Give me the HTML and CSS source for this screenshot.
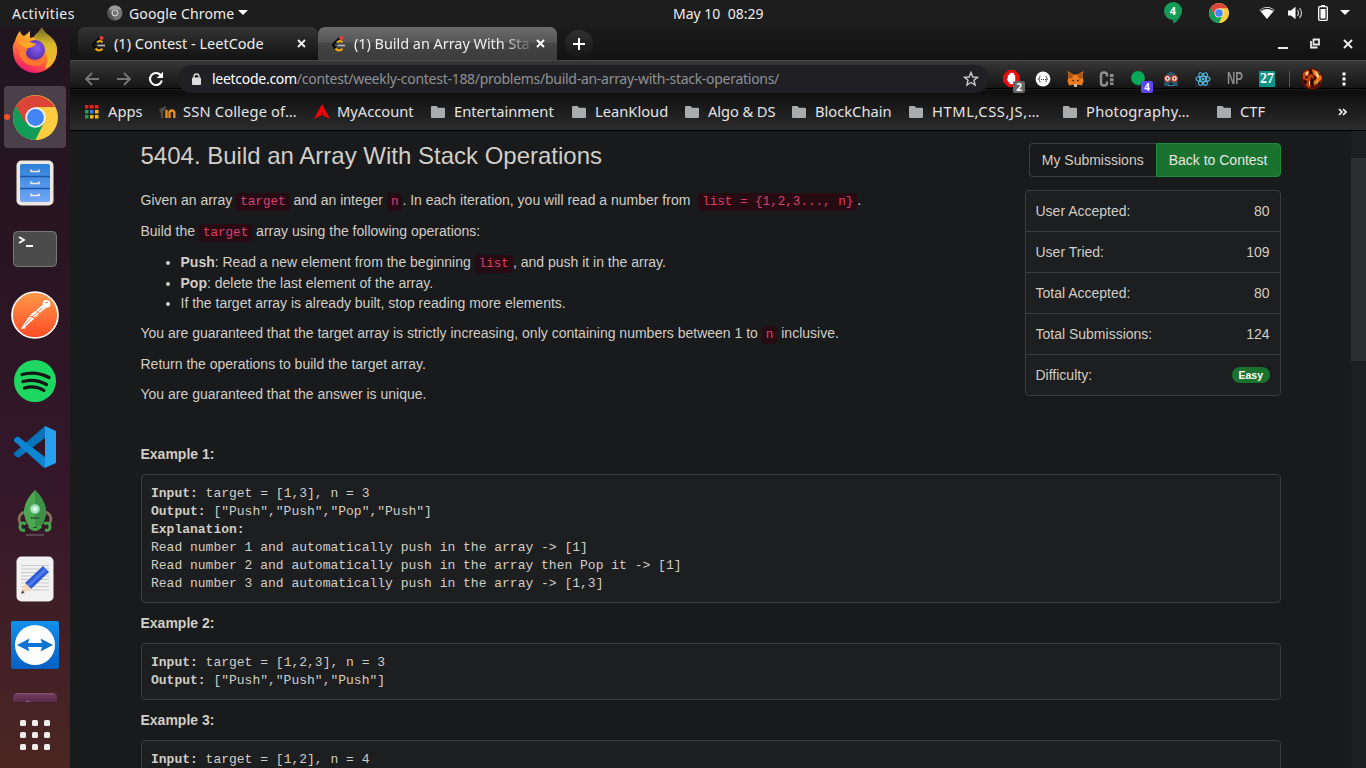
FILE: index.html
```html
<!DOCTYPE html>
<html lang="en">
<head>
<meta charset="utf-8">
<title>Build an Array With Stack Operations - LeetCode</title>
<link rel="stylesheet" href="styles.css">
</head>
<body>
<svg class="defs" width="0" height="0" aria-hidden="true">
  <defs>
    <linearGradient id="ffo" x1="0.8" y1="0" x2="0.3" y2="1"><stop offset="0" stop-color="#ffd93b"/><stop offset=".4" stop-color="#ff9a2c"/><stop offset=".75" stop-color="#ff4a45"/><stop offset="1" stop-color="#e8127c"/></linearGradient>
    <linearGradient id="ffy" x1="0" y1="0" x2="0" y2="1"><stop offset="0" stop-color="#6b6526"/><stop offset=".4" stop-color="#d8b92c"/><stop offset="1" stop-color="#ffb52c"/></linearGradient>
    <radialGradient id="ffp" cx=".6" cy=".4"><stop offset="0" stop-color="#8a5cf0"/><stop offset="1" stop-color="#5a35b8"/></radialGradient>
    <linearGradient id="pm" x1="0" y1="0" x2="0" y2="1"><stop offset="0" stop-color="#ff9a4a"/><stop offset="1" stop-color="#ff4a25"/></linearGradient>
    <linearGradient id="tv" x1="0" y1="0" x2="0" y2="1"><stop offset="0" stop-color="#1290ec"/><stop offset="1" stop-color="#0660c4"/></linearGradient>
    <linearGradient id="drawer" x1="0" y1="0" x2="0" y2="1"><stop offset="0" stop-color="#2d80d8"/><stop offset="1" stop-color="#72a6f5"/></linearGradient>
    <linearGradient id="plum" x1="0" y1="0" x2="0" y2="1"><stop offset="0" stop-color="#8a5a78"/><stop offset=".2" stop-color="#6f3a5c"/><stop offset="1" stop-color="#5a2a4a"/></linearGradient>
    <symbol id="chrome" viewBox="0 0 44 44">
      <circle cx="22" cy="22" r="22" fill="#ffcd40"/>
      <path d="M22 22 3 11A22 22 0 0 0 22 44L31.500 27.500Z" fill="#0f9d58"/>
      <path d="M22 22 12.500 27.500 3 11A22 22 0 0 1 41 12L22 12Z" fill="#db4437"/>
      <path d="M22 12H41A22 22 0 0 1 22 44L31 26Z" fill="#ffcd40"/>
      <circle cx="22" cy="22" r="10" fill="#f1f1f1"/><circle cx="22" cy="22" r="8.200" fill="#4285f4"/>
    </symbol>
    <symbol id="folder" viewBox="0 0 14 12"><path d="M1 0H5.500L7 1.700H13Q14 1.700 14 2.700V11Q14 12 13 12H1Q0 12 0 11V1Q0 0 1 0Z" fill="#a9abad"/></symbol>
    <symbol id="leet" viewBox="0 0 16 18">
      <path d="M8.500 3 2.500 9Q1.800 10 2.500 11L4.500 13.500" fill="none" stroke="#090909" stroke-width="2.200"/>
      <path d="M4.500 13.500Q8 17.500 11.500 13.800M6 7.500Q9 4.500 11.500 7.300" fill="none" stroke="#f5a80c" stroke-width="2"/>
      <path d="M6.500 10.500H14" stroke="#b8b8b8" stroke-width="1.700"/><circle cx="10.500" cy="3" r="2" fill="#dc4038"/>
    </symbol>
  </defs>
</svg>

<header class="topbar">
  <span class="activities">Activities</span>
  <svg class="app-icon" width="16" height="16" viewBox="0 0 16 16"><circle cx="8" cy="8" r="7.500" fill="#747474"/><path d="M1.500 4A7.500 7.500 0 0 1 14.500 4.500L8 4.500Z" fill="#9b9b9b"/><path d="M5 10 8 15.500A7.500 7.500 0 0 1 1.500 4Z" fill="#555"/><circle cx="8" cy="8" r="3.300" fill="#d8d8d8"/><circle cx="8" cy="8" r="2.400" fill="#747474"/></svg>
  <span class="app-name">Google Chrome</span>
  <i class="caret"></i>
  <span class="clock">May 10&nbsp; 08:29</span>
  <div class="tray">
    <svg class="hangouts" width="18" height="22" viewBox="0 0 18 22"><path d="M9 0A9 9 0 1 1 9 18L9.500 21.500Q16 18 17.500 11L9 0Z" fill="#159b57"/><circle cx="9" cy="9" r="9" fill="#159b57"/><text x="9" y="13.300" class="bubble-num">4</text></svg>
    <svg class="tray-chrome" width="20" height="20"><use href="#chrome"/></svg>
    <svg class="wifi" width="16" height="14" viewBox="0 0 16 14"><path d="M.5 4Q8-2 15.500 4L8 13Z" fill="#fff"/><path d="M1.500 4.600Q8 0 14.500 4.600" fill="none" stroke="#1d1d1d" stroke-width="1.200"/></svg>
    <svg class="sound" width="15" height="14" viewBox="0 0 15 14"><path d="M0 4.500H3L7.500.8V13.200L3 9.500H0Z" fill="#fff"/><path d="M9.500 4Q11.500 7 9.500 10M11.500 2Q15.500 7 11.500 12" fill="none" stroke="#ccc" stroke-width="1.200"/></svg>
    <svg class="battery" width="10" height="16" viewBox="0 0 10 16"><path d="M3 0H7V2H3Z" fill="#fff"/><rect x=".7" y="1.700" width="8.600" height="13.600" rx="1" fill="none" stroke="#fff" stroke-width="1.300"/><path d="M2.500 4H7.500V13.500H2.500Z" fill="#fff"/></svg>
    <i class="caret"></i>
  </div>
</header>

<div class="desktop">
  <nav class="dock">
    <div class="slot first"><svg width="46" height="46" viewBox="0 0 46 46"><path d="M3 14Q5 7 8 4Q9 8 12 9Q15 7 18 4L18 11 34 7Q44 13 45 24A22 22 0 0 1 1 24Q0 18 3 14Z" fill="url(#ffo)"/><path d="M30 0Q32 5 38 9Q46 16 45 25Q43 38 33 42Q38 30 32 20Q22 14 22 9Q26 6 30 0Z" fill="url(#ffy)"/><circle cx="23" cy="23" r="10" fill="url(#ffp)"/><path d="M7 18Q16 14 24 17Q21 21 16 21Q11 29 18 33Q28 36 34 29Q35 37 24 39Q10 38 7 27Z" fill="#ff7a2e"/><path d="M6 16Q15 13 24 17Q20 21 14 21Z" fill="#ffa72c"/></svg></div>
    <div class="slot active"><i class="run-dot"></i><svg width="45" height="45"><use href="#chrome"/></svg></div>
    <div class="slot"><svg width="38" height="46" viewBox="0 0 38 46"><rect x=".5" y=".5" width="37" height="45" rx="5" fill="#ede8e0"/><rect x="4" y="4" width="30" height="38" rx="2" fill="url(#drawer)"/><path d="M4 16.500H34M4 28.500H34" stroke="#1758a8" stroke-width="1.500"/><path d="M15 9.500V11.500H23V9.500M15 21.500V23.500H23V21.500M15 33.500V35.500H23V33.500" stroke="#eee9e2" stroke-width="1.600" fill="none"/></svg></div>
    <div class="slot"><svg width="44" height="36" viewBox="0 0 44 36"><rect x=".5" y=".5" width="43" height="35" rx="4" fill="#4b4b4b" stroke="#777"/><path d="M6 6 11 9 6 12M13 15H20" fill="none" stroke="#fff" stroke-width="1.800"/></svg></div>
    <div class="slot"><svg width="48" height="48" viewBox="0 0 48 48"><circle cx="24" cy="24" r="23" fill="url(#pm)" stroke="#fff" stroke-width="1.700"/><g fill="#fff"><circle cx="35.500" cy="12.800" r="3.900"/><path d="M31.500 14 34.500 17.500 25 26.500 18.500 24.500Z"/><path d="M18 25.500 23.500 27.500 14.500 35.500 14 37.500 10 38 12 34.500Z"/></g><path d="M31 17 21 26M33 18.500 23 27M25 19.500 29 23M20 27 14 34" stroke="#ff753a" stroke-width=".9"/><path d="M34 12 37 11" stroke="#ff753a"/></svg></div>
    <div class="slot"><svg width="42" height="42" viewBox="0 0 42 42"><circle cx="21" cy="21" r="21" fill="#1ed760"/><path d="M8 14.500Q22 10.500 35 17.500M9 21.500Q21 18 32.500 24.500M10.500 28Q21 25 30 30.500" fill="none" stroke="#151515" stroke-linecap="round" stroke-width="3.200"/></svg></div>
    <div class="slot"><svg width="42" height="42" viewBox="0 0 42 42"><path d="M31 0V12L5 31.500Q3 32 0 28.500V27Z" fill="#0873bb"/><path d="M0 14Q0 12 4 10.500L31 31V42Q29 41.500 28 40L0 15Z" fill="#0c86d4"/><path d="M31 0 42 5V37L31 42Z" fill="#28a0f0"/></svg></div>
    <div class="slot"><svg width="36" height="46" viewBox="0 0 36 46"><path d="M7 22Q-1 26 4 35M29 22Q37 26 32 35" fill="none" stroke="#85735b" stroke-width="2.600"/><path d="M18 0Q30 12 29 24Q27 34 23 37H13Q9 34 7 24Q6 12 18 0Z" fill="#4ca653"/><path d="M18 0Q30 12 29 24Q27 34 23 37H18Z" fill="#3c9146"/><circle cx="18" cy="19" r="4.800" fill="#9be0ba"/><circle cx="18" cy="19" r="2.500" fill="#d7f6e5"/><path d="M14 28H22" stroke="#20572a" stroke-width="2" stroke-dasharray="1.500 .8"/><path d="M9 34Q3 31 3 37Q3 41 8 40M27 34Q33 31 33 37Q33 41 28 40M12 36Q18 43 24 36" fill="none" stroke="#43a64c" stroke-width="3"/><path d="M9 45H27" stroke="#80727a" stroke-width="1"/></svg></div>
    <div class="slot"><svg width="38" height="46" viewBox="0 0 38 46"><rect x=".5" y=".5" width="37" height="45" rx="5" fill="#f1f1f1"/><path d="M5 9.500H33M5 13H33M5 16.500H33M5 20H33M5 23.500H33M5 27H33M5 30.500H33M5 34H33" stroke="#cbcbcb"/><path d="M27 10 33 16 15 33 9 27Z" fill="#315bd0"/><path d="M29 12 31 14 13 31 11 29Z" fill="#4d7cf0"/><path d="M9 27 15 33 5 38Z" fill="#f5d5b5"/><path d="M6.500 34.500 8.500 36.500 5 38Z" fill="#333"/></svg></div>
    <div class="slot"><svg width="48" height="48" viewBox="0 0 48 48"><rect width="48" height="48" rx="2" fill="url(#tv)"/><circle cx="24" cy="24" r="20" fill="#fff"/><path d="M6 24 18.500 17.500 17 22H31L29.500 17.500 42 24 29.500 30.500 31 26H17L18.500 30.500Z" fill="#0c74d3"/></svg></div>
    <div class="slot partial"><svg width="44" height="9" viewBox="0 0 44 9"><path d="M0 9V5Q0 0 5 0H39Q44 0 44 5V9Z" fill="url(#plum)"/><path d="M13 7 18 9H13Z" fill="#895b78"/></svg></div>
    <div class="grid-btn"><i></i><i></i><i></i><i></i><i></i><i></i><i></i><i></i><i></i></div>
  </nav>

  <section class="browser">
    <div class="tabs">
      <div class="tab"><svg class="fav" width="16" height="18"><use href="#leet"/></svg><span class="tab-title t1">(1) Contest - LeetCode</span><svg class="x" width="9" height="9" viewBox="0 0 9 9"><path d="M1 1 8 8M8 1 1 8" stroke="#eee" stroke-width="1.900"/></svg></div>
      <div class="tab current"><svg class="fav" width="16" height="18"><use href="#leet"/></svg><span class="tab-title t2">(1) Build an Array With Sta</span><svg class="x" width="9" height="9" viewBox="0 0 9 9"><path d="M1 1 8 8M8 1 1 8" stroke="#fff" stroke-width="1.900"/></svg></div>
      <div class="new-tab"><svg width="12" height="12" viewBox="0 0 12 12"><path d="M6 0V12M0 6H12" stroke="#fff" stroke-width="2"/></svg></div>
      <div class="win"><svg width="76" height="12" viewBox="0 0 76 12"><path d="M0 10H10" stroke="#e8e8e8" stroke-width="2"/><path d="M33 3V9.500H39.500M35.500 1.500H41V6.500H35.500Z" fill="none" stroke="#e8e8e8" stroke-width="1.800"/><path d="M66 2 74 10M74 2 66 10" stroke="#e8e8e8" stroke-width="2"/></svg></div>
    </div>

    <div class="toolbar">
      <div class="nav">
        <svg width="16" height="14" viewBox="0 0 16 14"><path d="M15 7H2M8 1 2 7 8 13" fill="none" stroke="#777" stroke-width="1.800"/></svg>
        <svg width="16" height="14" viewBox="0 0 16 14"><path d="M1 7H14M8 1 14 7 8 13" fill="none" stroke="#777" stroke-width="1.800"/></svg>
        <svg width="16" height="16" viewBox="0 0 16 16"><path d="M12.500 4A6 6 0 1 0 13.800 9.500" fill="none" stroke="#fff" stroke-width="2.100"/><path d="M15 .8V7H8.800Z" fill="#fff"/></svg>
      </div>
      <div class="omnibox">
        <svg width="9" height="12" viewBox="0 0 9 12"><rect y="4.500" width="9" height="7.500" rx="1" fill="#ddd"/><path d="M2 5V3.300Q2 1 4.500 1T7 3.300V5" fill="none" stroke="#ddd" stroke-width="1.300"/></svg>
        <span class="url"><b>leetcode.com</b>/contest/weekly-contest-188/problems/build-an-array-with-stack-operations/</span>
        <svg class="star" width="16" height="16" viewBox="0 0 16 16"><path d="M8 1.500 9.900 6 14.500 6.300 11 9.300 12.100 14 8 11.500 3.900 14 5 9.300 1.500 6.300 6.100 6Z" fill="none" stroke="#ccc" stroke-width="1.400"/></svg>
      </div>
      <div class="extensions">
        <span class="ext"><svg width="17" height="17" viewBox="0 0 16 16"><path d="M5 0H11L16 5V11L11 16H5L0 11V5Z" fill="#e40d0d"/><path d="M4.500 8V5H6V3H7.500V2.500H9V3H10.500V5H11.500V11Q10 13.500 7.500 13.500Q6 13 3.500 8.500Z" fill="#fff"/></svg><em class="badge gray">2</em></span>
        <span class="ext"><svg width="16" height="16" viewBox="0 0 16 16"><circle cx="8" cy="8" r="7.400" fill="#fff"/><path d="M5.500 5Q4.500 5 4.500 6.500T3.300 8Q4.500 8 4.500 9.500T5.500 11M10.500 5Q11.500 5 11.500 6.500T12.700 8Q11.500 8 11.500 9.500T10.500 11" fill="none" stroke="#444" stroke-width="1"/><path d="M6 8.500H11" stroke="#333" stroke-dasharray="1 1"/></svg></span>
        <span class="ext"><svg width="17" height="16" viewBox="0 0 17 16"><path d="M.5 0 6.500 3.500H10.500L16.500 0 15.500 6 16.500 10 15 14.500 10.500 13.500 9.500 16H7.500L6.500 13.500 2 14.500 .5 10 1.500 6Z" fill="#ee7c1c"/><path d="M1 1 6.500 4 5 7.500H1.500ZM16 1 10.500 4 12 7.500H15.500Z" fill="#a95719"/><path d="M6.500 13H10.500L9.500 16H7.500Z" fill="#c9bba9"/><path d="M5 9 7 10M12 9 10 10" stroke="#332b29" stroke-width="1.300"/></svg></span>
        <span class="ext"><svg width="16" height="16" viewBox="0 0 16 16"><path d="M8 5.500V4Q8 1.500 5 1.500T2 4V12Q2 14.500 5 14.500T8 12V10.500" fill="none" stroke="#8f8f8f" stroke-width="2.500"/><path d="M11 3H14.500V6H11ZM11 7.300H14.500V10.200H11ZM11 11.500H14.500V14H11Z" fill="#8f8f8f"/></svg></span>
        <span class="ext"><svg width="16" height="16" viewBox="0 0 16 16"><circle cx="7" cy="7" r="6.900" fill="#08a858"/><path d="M6 12 8 15.500V12" fill="#08a858"/></svg><em class="badge purple">4</em></span>
        <span class="ext"><svg width="16" height="16" viewBox="0 0 16 16"><path d="M2 7Q4 1 8 .8T14 7L15 15H11L8 11 5 15H1Z" fill="#28566b"/><circle cx="4.500" cy="7.500" r="2.800" fill="#fff" stroke="#d0452e" stroke-width="1.200"/><circle cx="11.500" cy="7.500" r="2.800" fill="#fff" stroke="#d0452e" stroke-width="1.200"/><circle cx="4.500" cy="7.500" r="1" fill="#222"/><circle cx="11.500" cy="7.500" r="1" fill="#222"/><path d="M5 14.500H11" stroke="#4d8aa3"/></svg></span>
        <span class="ext"><svg width="16" height="16" viewBox="0 0 16 16"><rect width="16" height="16" fill="#202326"/><g fill="none" stroke="#56bde6" stroke-width="1.100"><ellipse cx="8" cy="8" rx="7" ry="2.700"/><ellipse cx="8" cy="8" rx="7" ry="2.700" transform="rotate(60 8 8)"/><ellipse cx="8" cy="8" rx="7" ry="2.700" transform="rotate(120 8 8)"/></g><circle cx="8" cy="8" r="1.300" fill="#56bde6"/></svg></span>
        <span class="ext np">NP</span>
        <span class="ext ts">27</span>
      </div>
      <i class="divider"></i>
      <svg class="avatar" width="22" height="22" viewBox="0 0 22 22"><circle cx="11" cy="11" r="10.700" fill="#5c1206"/><path d="M2 5 6 2 9 4 7 8 11 6 13 10 9 12 12 16 8 20 5 17 7 13 2 11Z" fill="#c9420f"/><path d="M11 1 18 4 21 10 18 17 16 12 14 18 12 14 15 9 12 6Z" fill="#e8741c"/><path d="M4 5 8 3 6 8ZM14 3 18 7 17 11 15 6ZM8 13 10 14 8 18ZM15 14 17 12 16 17Z" fill="#ffe7a5"/><path d="M9 1 12 6 8 5ZM10 9 13 12 11 20 9 16ZM2 12 5 13 4 17ZM17 4 19 6 18 8ZM5 8 8 9 4 11ZM14 8 16 10 13 13ZM17 15 20 12 18 18Z" fill="#260704"/></svg>
      <svg class="kebab" width="4" height="14" viewBox="0 0 4 14"><path d="M.5.500H3.500V3.500H.5ZM.5 5.500H3.500V8.500H.5ZM.5 10.500H3.500V13.500H.5Z" fill="#fff"/></svg>
    </div>

    <div class="bookmarks">
      <a class="bm b1"><svg width="14" height="14" viewBox="0 0 14 14"><path d="M0 0H3.500V3.500H0ZM5 0H8.500V3.500H5ZM10 0H13.500V3.500H10Z" fill="#f21d18"/><path d="M0 5H3.500V8.500H0ZM0 10H3.500V13.500H0Z" fill="#17a65b"/><path d="M5 5H8.500V8.500H5Z" fill="#4678f0"/><path d="M5 10H8.500V13.500H5ZM10 5H13.500V8.500H10ZM10 10H13.500V13.500H10Z" fill="#f2b80c"/></svg><span>Apps</span></a>
      <a class="bm b2"><svg width="17" height="12" viewBox="0 0 17 12"><path d="M0 3 7 0 7 3 2 5V8" fill="#504b47"/><path d="M3 12V6Q3 4 5 4M7.500 3.500V12" fill="none" stroke="#6b5a48" stroke-width="1.500"/><path d="M7.500 12V4M10.500 12V7Q10.500 4.500 12.800 4.500T15.300 7V12" fill="none" stroke="#f08c12" stroke-width="2.300"/></svg><span>SSN College of…</span></a>
      <a class="bm b3"><svg width="16" height="15" viewBox="0 0 16 15"><path d="M8 0 16 15 8 11 0 15Z" fill="#f20505"/><path d="M7.500 8H8.500V11H7.500Z" fill="#400"/></svg><span>MyAccount</span></a>
      <a class="bm b4"><svg width="14" height="12"><use href="#folder"/></svg><span>Entertainment</span></a>
      <a class="bm b5"><svg width="14" height="12"><use href="#folder"/></svg><span>LeanKloud</span></a>
      <a class="bm b6"><svg width="14" height="12"><use href="#folder"/></svg><span>Algo &amp; DS</span></a>
      <a class="bm b7"><svg width="14" height="12"><use href="#folder"/></svg><span>BlockChain</span></a>
      <a class="bm b8"><svg width="14" height="12"><use href="#folder"/></svg><span>HTML,CSS,JS,…</span></a>
      <a class="bm b9"><svg width="14" height="12"><use href="#folder"/></svg><span>Photography…</span></a>
      <a class="bm b10"><svg width="14" height="12"><use href="#folder"/></svg><span>CTF</span></a>
      <svg class="more" width="9" height="8" viewBox="0 0 9 8"><path d="M1 1 4 4 1 7M5 1 8 4 5 7" fill="none" stroke="#fff" stroke-width="1.600"/></svg>
    </div>

    <div class="viewport">
      <main class="page">
        <div class="head">
          <h3>5404. Build an Array With Stack Operations</h3>
          <aside class="side">
            <div class="buttons"><a class="btn">My Submissions</a><a class="btn primary">Back to Contest</a></div>
            <ul class="stats">
              <li>User Accepted:<span>80</span></li>
              <li>User Tried:<span>109</span></li>
              <li>Total Accepted:<span>80</span></li>
              <li>Total Submissions:<span>124</span></li>
              <li>Difficulty:<span class="easy">Easy</span></li>
            </ul>
          </aside>
        </div>
        <article class="problem">
          <p class="coded">Given an array <code>target</code> and an integer <code>n</code>. In each iteration, you will read a number from&nbsp; <code>list = {1,2,3..., n}</code>.</p>
          <p class="coded">Build the <code>target</code> array using the following operations:</p>
          <ul>
            <li class="coded"><strong>Push</strong>: Read a new element from the beginning <code>list</code>, and push it in the array.</li>
            <li><strong>Pop</strong>: delete the last element of the array.</li>
            <li>If the target array is already built, stop reading more elements.</li>
          </ul>
          <p class="coded last">You are guaranteed that the target array is strictly increasing, only containing numbers between 1 to <code>n</code> inclusive.</p>
          <p>Return the operations to build the target array.</p>
          <p>You are guaranteed that the answer is unique.</p>
          <p>&nbsp;</p>
          <p><strong>Example 1:</strong></p>
<pre><strong>Input:</strong> target = [1,3], n = 3
<strong>Output:</strong> ["Push","Push","Pop","Push"]
<strong>Explanation: </strong>
Read number 1 and automatically push in the array -&gt; [1]
Read number 2 and automatically push in the array then Pop it -&gt; [1]
Read number 3 and automatically push in the array -&gt; [1,3]</pre>
          <p><strong>Example 2:</strong></p>
<pre><strong>Input:</strong> target = [1,2,3], n = 3
<strong>Output:</strong> ["Push","Push","Push"]</pre>
          <p><strong>Example 3:</strong></p>
<pre><strong>Input:</strong> target = [1,2], n = 4</pre>
        </article>
      </main>
      <div class="scrollbar"><i></i></div>
    </div>
  </section>
</div>
</body>
</html>
```

FILE: styles.css
```css
* { box-sizing: border-box; }
html, body { margin: 0; height: 100%; overflow: hidden; background: #181a1b; }
body { display: flex; flex-direction: column; width: 1366px; height: 768px; font-family: "Noto Sans", "Open Sans", sans-serif; font-size: 14px; color: #eee; }
svg { display: block; flex: none; }
.defs { position: absolute; }

/* Desktop panel */
.topbar { display: flex; align-items: center; flex: none; height: 27px; padding: 0 16px 2px 12px; background: #1d1d1d; white-space: nowrap; line-height: 23px; }
.topbar > span { padding-top: 2px; }
.activities { width: 95px; letter-spacing: 0.45px; }
.app-icon { margin-right: 6px; }
.app-name { width: 105px; letter-spacing: 0.15px; }
.caret { flex: none; border: 5px solid transparent; border-top-color: #fff; border-bottom: 0; margin-left: 4px; }
.clock { margin-left: 425px; }
.tray { display: flex; align-items: center; margin-left: auto; }
.tray .caret { margin-left: 12px; }
.bubble-num { font: bold 11px "Noto Sans", sans-serif; fill: #fff; text-anchor: middle; }
.tray-chrome { margin: 0 30px 0 27px; }
.sound { margin: 0 15px 0 13px; }

.desktop { display: flex; flex: 1; min-height: 0; }

/* Launcher */
.dock { width: 70px; flex: none; display: flex; flex-direction: column; align-items: center; overflow: hidden; background: linear-gradient(#20151f 0%, #291521 30%, #34172a 62%, #4b2622 100%); }
.slot { position: relative; width: 62px; height: 62px; margin-bottom: 4px; flex: none; display: flex; align-items: center; justify-content: center; }
.slot.first { height: 55px; align-items: flex-start; }
.slot.active { background: #4b404a; border-radius: 4px; }
.run-dot { position: absolute; left: 0; top: 28px; width: 6px; height: 6px; border-radius: 50%; background: #e95420; }
.slot.partial { height: 9px; margin: 13px 0 18px; }
.grid-btn { display: grid; grid-template-columns: repeat(3, 6px); gap: 6px; }
.grid-btn i { width: 6px; height: 6px; border-radius: 1.5px; background: #eeecea; }

/* Browser chrome */
.browser { flex: 1; min-width: 0; display: flex; flex-direction: column; }
.tabs { display: flex; height: 33px; flex: none; padding-left: 8px; background: linear-gradient(#1b1b1b, #121212); }
.tab { display: flex; align-items: center; width: 240px; height: 33px; padding: 0 12px 0 13px; border-radius: 7px 7px 0 0; background: linear-gradient(#343434, #111); }
.tab.current { width: 239px; background: linear-gradient(#6c6c6c, #565656 45%, #454545 50%, #3b3b3b); }
.tab-title { white-space: nowrap; margin-left: 7px; font-size: 14.5px; line-height: 20px; padding-bottom: 2px; }
.tab .x { margin-left: auto; }
.t2 { letter-spacing: -0.05px; -webkit-mask-image: linear-gradient(90deg, #000 148px, transparent 182px); }
.new-tab { width: 28px; height: 28px; margin: 3px 0 0 8px; border-radius: 50%; background: linear-gradient(#303030, #151515); display: flex; align-items: center; justify-content: center; }
.win { margin: 11px 12px 0 auto; }

.toolbar { display: flex; align-items: center; flex: none; height: 34px; padding: 2px 20px 0 14px; border-top: 1px solid #484848; background: linear-gradient(#363636 0, #151515 27px, #000 27px, #000 28px, #222 28px, #111 29px, #0d0d0d 33px); }
.nav { display: flex; align-items: center; gap: 16px; width: 94px; }
.omnibox { display: flex; align-items: center; width: 811px; height: 28px; border-radius: 14px; background: #202024; padding: 0 10px 0 14px; }
.url { margin-left: 11px; color: #8f9092; white-space: nowrap; letter-spacing: -0.28px; line-height: 28px; height: 28px; }
.url b { font-weight: 400; color: #fff; }
.star { margin-left: auto; }
.extensions { display: flex; gap: 8px; margin-left: 10px; }
.ext { position: relative; width: 24px; height: 22px; display: flex; align-items: center; justify-content: center; }
.badge { position: absolute; right: -2px; bottom: -3px; width: 12px; height: 12px; border-radius: 2px; font: bold 10px/12px "Noto Sans", sans-serif; text-align: center; color: #fff; }
.gray { background: #666; }
.purple { background: #5b45f5; }
.np { font: 700 17px "Liberation Sans", sans-serif; color: #8a8a8a; transform: scaleX(0.68); }
.np, .ts { flex: none; }
.ts { width: 16px; height: 16px; margin: 3px 4px; background: #0c9587; border-radius: 1px; font: bold 14px/16px "Liberation Serif", serif; color: #fff; }
.divider { width: 1px; height: 16px; background: #555; margin: 0 11px 0 10px; }
.kebab { margin-left: auto; }

.bookmarks { display: flex; align-items: center; flex: none; height: 37px; padding: 0 19px 1px 15px; border-bottom: 1px solid #000; background: linear-gradient(#101010, #2c2c2c); }
.bm { display: flex; align-items: center; flex: none; white-space: nowrap; color: #e4e4e4; font-size: 14.7px; line-height: 20px; }
.bm span { margin-left: 9px; padding-bottom: 1px; }
.b1 { width: 74px; } .b2 { width: 155px; } .b3 { width: 117px; } .b4 { width: 141px; } .b5 { width: 113px; }
.b6 { width: 107px; letter-spacing: -0.1px; } .b7 { width: 117px; } .b8 { width: 154px; letter-spacing: 0.6px; } .b9 { width: 154px; letter-spacing: 0.25px; } .b10 { width: 60px; }
.b2 { letter-spacing: 0.15px; }
.b2 span, .b3 span { margin-left: 7px; }
.more { margin-left: auto; }

/* Problem page */
.viewport { flex: 1; min-height: 0; display: flex; font: 14px/20px "Liberation Sans", Arial, sans-serif; color: #d1cdc7; }
.page { flex: 1; min-width: 0; padding: 12px 70.5px 0; overflow: hidden; }
.head { display: flex; justify-content: space-between; height: 47px; }
h3 { margin: 0; font-size: 24px; font-weight: 400; line-height: 26px; }
.side { width: 255.5px; }
.buttons { display: flex; justify-content: flex-end; }
.btn { height: 34px; padding: 6px 12px; border: 1px solid #3c4043; border-right: 0; border-radius: 4px 0 0 4px; color: #d1cdc7; white-space: nowrap; }
.btn.primary { color: #e8e6e3; background: #19732e; border: 1px solid #1f8a38; border-radius: 0 4px 4px 0; }
.stats { list-style: none; margin: 13px 0 0; padding: 0; border: 1px solid #3a3e40; border-radius: 4px; background: #1c1e1f; }
.stats li { display: flex; align-items: center; justify-content: space-between; height: 41px; padding: 0 10px 0 9.5px; border-bottom: 1px solid #3a3e40; }
.stats li:last-child { border: 0; height: 40px; }
.easy { font-size: 10.5px; font-weight: 700; line-height: 16px; padding: 0 6.5px; border-radius: 9px; background: #19732e; color: #fff; }
.problem p { margin: 0 0 10px; }
.problem .coded { height: 21px; }
.problem p.coded { height: 20.75px; }
.problem p.coded.last { height: 21.5px; }
.problem ul { margin: 0 0 10px; padding-left: 40px; }
code { font: 12.6px/18px "Liberation Mono", monospace; padding: 2px 4px; border-radius: 4px; color: #dc3f70; background: #270b13; }
pre { margin: 0 0 10px; padding: 9.500px; border: 1px solid #3a3e40; border-radius: 4px; background: #1c1e1f; font: 13px/18px "Liberation Mono", monospace; }
.scrollbar { width: 15px; background: #1c1e1f; padding-top: 27px; }
.scrollbar i { display: block; height: 203px; background: #2b2d2e; }
```
